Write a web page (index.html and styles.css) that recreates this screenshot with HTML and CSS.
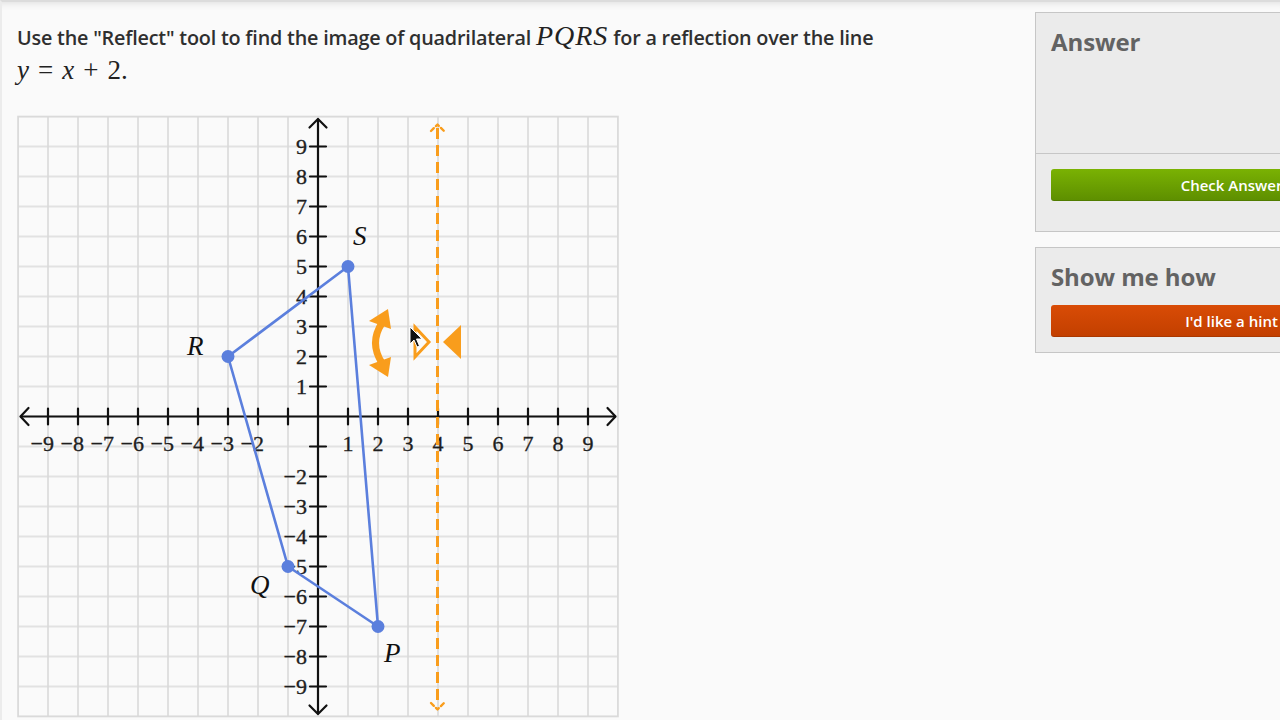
FILE: index.html
```html
<!DOCTYPE html>
<html lang="en">
<head>
<meta charset="utf-8">
<title>Reflect quadrilateral PQRS</title>
<link rel="stylesheet" href="styles.css">
</head>
<body>
<div class="page">
  <div class="main">
    <p class="question">Use the "Reflect" tool to find the image of quadrilateral <span class="math mi big">PQRS</span> for a reflection over the line<br><span class="math"><span class="mi">y</span><span class="mo">=</span><span class="mi">x</span><span class="mo">+</span><span class="mn">2.</span></span></p>
    <svg class="graph" width="604" height="604" viewBox="17 116 604 604" xmlns="http://www.w3.org/2000/svg">
      <defs>
        <pattern id="grid" x="17" y="115.5" width="30" height="30" patternUnits="userSpaceOnUse">
          <path d="M1 0 V30 M0 1 H30" stroke="#dadada" stroke-width="1.6" fill="none"/>
        </pattern>
      </defs>
      <rect x="18" y="116.5" width="600" height="600" fill="url(#grid)" stroke="#dadada" stroke-width="1.6"/>

      <!-- axes -->
      <g stroke="#111" stroke-width="2.2" fill="none" stroke-linecap="round" stroke-linejoin="round">
        <path d="M21 416.5 H615"/>
        <path d="M28.5 408 L20.5 416.5 L28.5 425"/>
        <path d="M607.5 408 L615.5 416.5 L607.5 425"/>
        <path d="M318 119.5 V713.5"/>
        <path d="M309.5 127.5 L318 119 L326.5 127.5"/>
        <path d="M309.5 705.5 L318 714 L326.5 705.5"/>
        <path d="M48 408.5 V424.5 M78 408.5 V424.5 M108 408.5 V424.5 M138 408.5 V424.5 M168 408.5 V424.5 M198 408.5 V424.5 M228 408.5 V424.5 M258 408.5 V424.5 M288 408.5 V424.5 M348 408.5 V424.5 M378 408.5 V424.5 M408 408.5 V424.5 M438 408.5 V424.5 M468 408.5 V424.5 M498 408.5 V424.5 M528 408.5 V424.5 M558 408.5 V424.5 M588 408.5 V424.5"/>
        <path d="M310 146.5 H326 M310 176.5 H326 M310 206.5 H326 M310 236.5 H326 M310 266.5 H326 M310 296.5 H326 M310 326.5 H326 M310 356.5 H326 M310 386.5 H326 M310 446.5 H326 M310 476.5 H326 M310 506.5 H326 M310 536.5 H326 M310 566.5 H326 M310 596.5 H326 M310 626.5 H326 M310 656.5 H326 M310 686.5 H326"/>
      </g>

      <!-- axis labels -->
      <g class="tick" text-anchor="end">
        <text x="54" y="451">−9</text>
        <text x="84" y="451">−8</text>
        <text x="114" y="451">−7</text>
        <text x="144" y="451">−6</text>
        <text x="174" y="451">−5</text>
        <text x="204" y="451">−4</text>
        <text x="234" y="451">−3</text>
        <text x="264" y="451">−2</text>
        <text x="353.5" y="451">1</text>
        <text x="383.5" y="451">2</text>
        <text x="413.5" y="451">3</text>
        <text x="443.5" y="451">4</text>
        <text x="473.5" y="451">5</text>
        <text x="503.5" y="451">6</text>
        <text x="533.5" y="451">7</text>
        <text x="563.5" y="451">8</text>
        <text x="593.5" y="451">9</text>

        <text x="307" y="154">9</text>
        <text x="307" y="184">8</text>
        <text x="307" y="214">7</text>
        <text x="307" y="244">6</text>
        <text x="307" y="274">5</text>
        <text x="307" y="304">4</text>
        <text x="307" y="334">3</text>
        <text x="307" y="364">2</text>
        <text x="307" y="394">1</text>
        <text x="307" y="484">−2</text>
        <text x="307" y="514">−3</text>
        <text x="307" y="544">−4</text>
        <text x="307" y="574">−5</text>
        <text x="307" y="604">−6</text>
        <text x="307" y="634">−7</text>
        <text x="307" y="664">−8</text>
        <text x="307" y="694">−9</text>
      </g>

      <!-- reflection line -->
      <g stroke="#f99d1c" fill="none">
        <path d="M437.5 128 V706" stroke-width="3" stroke-dasharray="11 6"/>
        <path d="M431 131 L437.5 124.5 L444 131" stroke-width="2.4" stroke-linecap="round" stroke-linejoin="round" stroke-dasharray="4 3"/>
        <path d="M431 703 L437.5 709.5 L444 703" stroke-width="2.4" stroke-linecap="round" stroke-linejoin="round" stroke-dasharray="4 3"/>
      </g>

      <!-- quadrilateral -->
      <polygon points="378,626.5 288,566.5 228,356.5 348,266.5" fill="none" stroke="#5b7fdd" stroke-width="2.6" stroke-linejoin="round"/>
      <g fill="#5b7fdd">
        <circle cx="378" cy="626.5" r="6.5"/>
        <circle cx="288" cy="566.5" r="6.5"/>
        <circle cx="228" cy="356.5" r="6.5"/>
        <circle cx="348" cy="266.5" r="6.5"/>
      </g>
      <g class="vlabel">
        <text x="353" y="245">S</text>
        <text x="187" y="355">R</text>
        <text x="250" y="594">Q</text>
        <text x="384" y="662">P</text>
      </g>

      <!-- reflect tool handles -->
      <g fill="#f99d1c">
        <path d="M382 323 Q369 343 382 363" stroke="#f99d1c" stroke-width="7" fill="none"/>
        <polygon points="388,309 369,321 391,329"/>
        <polygon points="388,377 369,365 391,357"/>
        <polygon points="415,327 429,342 415,357" fill="none" stroke="#f99d1c" stroke-width="3" stroke-linejoin="miter"/>
        <polygon points="461,325 443,342 461,359"/>
      </g>

      <!-- mouse cursor -->
      <path d="M410 327 L410 344 L414 340 L417 347 L419.5 346 L416.5 339 L422 339 Z" fill="#111" stroke="#fff" stroke-width="1"/>
    </svg>
  </div>

  <aside class="sidebar">
    <section class="panel">
      <div class="panel-top">
        <h2 class="panel-title">Answer</h2>
      </div>
      <div class="panel-bottom">
        <button class="btn btn-green" type="button">Check Answer</button>
      </div>
    </section>
    <section class="panel panel-hint">
      <h2 class="panel-title">Show me how</h2>
      <button class="btn btn-orange" type="button">I'd like a hint</button>
    </section>
  </aside>
</div>
</body>
</html>
```
FILE: styles.css
```css
* { box-sizing: border-box; }

html, body {
  margin: 0;
  padding: 0;
  height: 100%;
  overflow: hidden;
}

body {
  background: #fafafa;
  font-family: "Open Sans", "Lato", "Liberation Sans", sans-serif;
  color: #333;
}

.page {
  display: flex;
  height: 720px;
  border-top: 2px solid #dcdcdc;
  border-left: 2px solid #ececec;
  box-shadow: inset 0 8px 8px -8px rgba(0, 0, 0, 0.14);
}

.main {
  width: 1033px;
  flex-shrink: 0;
  padding: 18px 0 0 15px;
}

.question {
  margin: 0;
  font-size: 19.8px;
  font-weight: 600;
  line-height: 32px;
  color: #2f2f2f;
  letter-spacing: -0.2px;
  height: 68px;
}

.math {
  font-family: "Liberation Serif", "DejaVu Serif", serif;
  font-weight: 400;
  font-size: 27px;
  color: #222;
  letter-spacing: 0;
}

.mi { font-style: italic; }
.big { font-size: 28px; letter-spacing: 1px; }
.mo { margin: 0 9px; font-style: normal; }
.mn { font-style: normal; }

.graph {
  display: block;
  margin-top: 28px;
  overflow: visible;
}

.tick {
  font-family: "Liberation Serif", "DejaVu Serif", serif;
  font-size: 22px;
  fill: #1e1e1e;
  stroke: #1e1e1e;
  stroke-width: 0.35px;
}

.vlabel {
  font-family: "Liberation Serif", "DejaVu Serif", serif;
  font-style: italic;
  font-size: 27px;
  fill: #111;
}

.sidebar {
  width: 392px;
  flex-shrink: 0;
  padding-top: 10px;
  display: flex;
  flex-direction: column;
  gap: 15px;
}

.panel {
  background: #ebebeb;
  border: 1px solid #c6c6c6;
  border-right: none;
}

.panel-top {
  height: 141px;
  padding: 13px 15px 0;
  border-bottom: 1px solid #c6c6c6;
}

.panel-bottom {
  padding: 15px 15px 30px;
}

.panel-title {
  margin: 0;
  font-family: "Open Sans", "Lato", "Liberation Sans", sans-serif;
  font-size: 24px;
  font-weight: 700;
  color: #636363;
  line-height: 32px;
  letter-spacing: -0.1px;
}

.panel-hint {
  padding: 13px 15px 15px;
}

.panel-hint .panel-title {
  margin-bottom: 12px;
}

.btn {
  display: block;
  width: 100%;
  height: 32px;
  border: none;
  border-radius: 3px;
  color: #fff;
  font-family: "Open Sans", "Lato", "Liberation Sans", sans-serif;
  font-size: 15px;
  font-weight: 600;
  padding: 0;
}

.btn-green {
  background: linear-gradient(#7ab203, #5d8e00);
  box-shadow: inset 0 -1px 0 rgba(0, 0, 0, 0.12);
}

.btn-orange {
  background: linear-gradient(#d94c06, #c23f00);
  box-shadow: inset 0 -1px 0 rgba(0, 0, 0, 0.12);
}
```
